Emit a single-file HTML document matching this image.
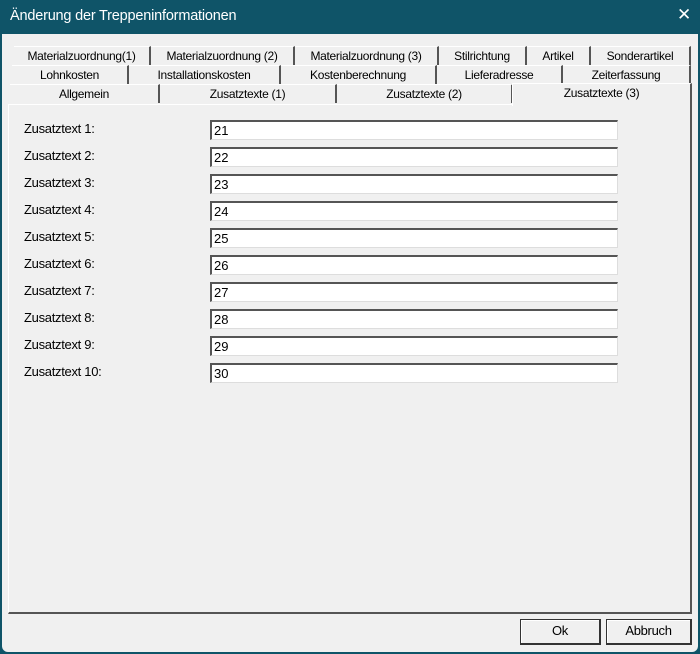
<!DOCTYPE html>
<html><head><style>
*{margin:0;padding:0;box-sizing:border-box}
body{width:700px;height:654px;background:#0f5468;position:relative;overflow:hidden;font-family:"Liberation Sans",sans-serif;font-size:12px;color:#000}
.win{position:absolute;left:2px;top:34px;width:696px;height:618px;background:#f0f0f0;border-radius:0 0 6px 6px}
.title{position:absolute;left:10px;top:8px;color:#fff;font-size:14.5px;letter-spacing:-0.2px}
.x{position:absolute;left:677px;top:5px;color:#fff;font-size:17px;font-weight:300}
.t{position:absolute;height:19px;text-align:center;line-height:18px;border-right:2px solid #555;border-top:1px solid #fff;letter-spacing:-0.3px;font-size:12px}
.panel{position:absolute;left:8px;top:104px;width:684px;height:510px;border-left:1px solid #fff;border-top:1px solid #fff;border-right:2px solid #555;border-bottom:2px solid #555}
.sel{position:absolute;left:512px;top:83px;width:180px;height:23px;background:#f0f0f0;border-top:1px solid #fff;border-left:1px solid #fff;border-right:2px solid #555;text-align:center;line-height:18px;letter-spacing:-0.3px}
.l{position:absolute;left:24px;letter-spacing:-0.3px;font-size:13px}
.i{position:absolute;left:210px;width:408px;height:20px;background:#fff;border-top:2px solid #555;border-left:2px solid #555;border-right:1px solid #ddd;border-bottom:1px solid #ddd;padding-left:2px;line-height:17px;font-size:13px}
.b{position:absolute;top:619px;height:26px;border:1px solid #333;border-right:2px solid #333;border-bottom:2px solid #333;background:#f0f0f0;text-align:center;line-height:22px;box-shadow:inset 1px 1px 0 #fff;font-size:13px;letter-spacing:-0.3px}
</style></head><body>
<div class="title">Änderung der Treppeninformationen</div>
<div class="x">✕</div>
<div class="win"></div>
<div class="t" style="left:14px;top:46px;width:137px">Materialzuordnung(1)</div>
<div class="t" style="left:151px;top:46px;width:144px">Materialzuordnung (2)</div>
<div class="t" style="left:295px;top:46px;width:144px">Materialzuordnung (3)</div>
<div class="t" style="left:439px;top:46px;width:88px">Stilrichtung</div>
<div class="t" style="left:527px;top:46px;width:64px">Artikel</div>
<div class="t" style="left:591px;top:46px;width:100px">Sonderartikel</div>
<div class="t" style="left:12px;top:65px;width:117px">Lohnkosten</div>
<div class="t" style="left:129px;top:65px;width:152px">Installationskosten</div>
<div class="t" style="left:281px;top:65px;width:156px">Kostenberechnung</div>
<div class="t" style="left:437px;top:65px;width:126px">Lieferadresse</div>
<div class="t" style="left:563px;top:65px;width:128px">Zeiterfassung</div>
<div class="t" style="left:10px;top:84px;width:150px">Allgemein</div>
<div class="t" style="left:160px;top:84px;width:177px">Zusatztexte (1)</div>
<div class="t" style="left:337px;top:84px;width:176px">Zusatztexte (2)</div>
<div class="panel"></div>
<div class="sel">Zusatztexte (3)</div>
<div class="l" style="top:121px">Zusatztext 1:</div><div class="i" style="top:120px">21</div>
<div class="l" style="top:148px">Zusatztext 2:</div><div class="i" style="top:147px">22</div>
<div class="l" style="top:175px">Zusatztext 3:</div><div class="i" style="top:174px">23</div>
<div class="l" style="top:202px">Zusatztext 4:</div><div class="i" style="top:201px">24</div>
<div class="l" style="top:229px">Zusatztext 5:</div><div class="i" style="top:228px">25</div>
<div class="l" style="top:256px">Zusatztext 6:</div><div class="i" style="top:255px">26</div>
<div class="l" style="top:283px">Zusatztext 7:</div><div class="i" style="top:282px">27</div>
<div class="l" style="top:310px">Zusatztext 8:</div><div class="i" style="top:309px">28</div>
<div class="l" style="top:337px">Zusatztext 9:</div><div class="i" style="top:336px">29</div>
<div class="l" style="top:364px">Zusatztext 10:</div><div class="i" style="top:363px">30</div>
<div class="b" style="left:520px;width:81px">Ok</div>
<div class="b" style="left:606px;width:86px">Abbruch</div>
</body></html>
